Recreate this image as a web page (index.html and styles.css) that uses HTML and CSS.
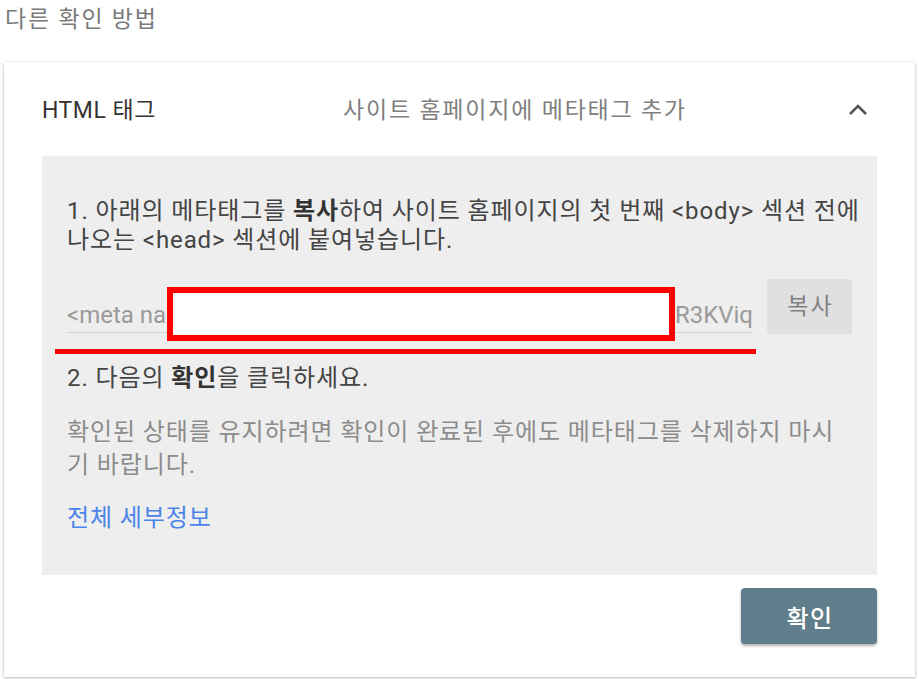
FILE: index.html
```html
<!DOCTYPE html>
<html lang="ko">
<head>
<meta charset="utf-8">
<title>다른 확인 방법</title>
<link rel="stylesheet" href="styles.css">
</head>
<body>
<div class="page">
  <h1 class="title">다른 확인 방법</h1>
  <section class="card">
    <div class="card-head">
      <span class="head-name">HTML 태그</span>
      <span class="head-desc">사이트 홈페이지에 메타태그 추가</span>
      <svg class="chevron" width="20" height="14" viewBox="0 0 20 14"><path d="M2 12 L10 4 L18 12" fill="none" stroke="#555" stroke-width="2.6"/></svg>
    </div>
    <div class="panel">
      <p class="step">1. 아래의 메타태그를 <b>복사</b>하여 사이트 홈페이지의 첫 번째 &lt;body&gt; 섹션 전에 나오는 &lt;head&gt; 섹션에 붙여넣습니다.</p>
      <div class="copy-row">
        <div class="meta-input"><span>&lt;meta na</span><span>R3KViq</span></div>
        <button class="copy-btn">복사</button>
      </div>
      <p class="step step2">2. 다음의 <b>확인</b>을 클릭하세요.</p>
      <p class="note">확인된 상태를 유지하려면 확인이 완료된 후에도 메타태그를 삭제하지 마시기 바랍니다.</p>
      <a class="details" href="#">전체 세부정보</a>
    </div>
    <div class="actions">
      <button class="confirm-btn">확인</button>
    </div>
  </section>
  <div class="redact-box"></div>
  <div class="redact-line"></div>
</div>
</body>
</html>
```

FILE: styles.css
```css
* { box-sizing: border-box; }
html, body { margin: 0; padding: 0; background: #fff; }
body {
  font-family: Roboto, "Noto Sans CJK KR", sans-serif;
  color: #444;
}
.page { position: relative; width: 918px; height: 679px; overflow: hidden; }
.title {
  margin: 5px 0 0 5px;
  font-size: 23px;
  letter-spacing: 1.8px;
  line-height: 29px;
  font-weight: 400;
  color: #7a7a7a;
}
.card {
  margin: 28px 0 0 4px;
  width: 911px;
  height: 615px;
  background: #fff;
  box-shadow: 0 1px 3px rgba(0,0,0,0.28), 0 0 1px rgba(0,0,0,0.12);
  display: flex;
  flex-direction: column;
}
.card-head {
  height: 94px;
  display: flex;
  align-items: center;
  padding: 0 47px 2px 38px;
  font-size: 23px;
}
.head-name { width: 301px; color: #333; letter-spacing: 0.5px; }
.head-desc { flex: 1; color: #808080; letter-spacing: 1.8px; }
.chevron { display: block; margin-top: 2px; }
.panel {
  margin: 0 38px;
  height: 419px;
  background: #eeeeee;
  padding: 41px 12px 0 25px;
  font-size: 24px;
  letter-spacing: 0.9px;
  line-height: 29px;
}
.step { margin: 0; color: #444; }
.step b { font-weight: 700; color: #333; }
.copy-row {
  margin-top: 24px;
  margin-right: 13px;
  height: 55px;
  display: flex;
  align-items: flex-end;
  gap: 14px;
  letter-spacing: 0;
}
.meta-input {
  flex: 1;
  height: 42px;
  padding-top: 8px;
  border-bottom: 1px solid #cfcfcf;
  display: flex;
  justify-content: space-between;
  font-family: Roboto, sans-serif;
  font-size: 24px;
  line-height: 32px;
  color: #9a9a9a;
  white-space: nowrap;
  overflow: hidden;
  margin-bottom: 1px;
}
.copy-btn {
  width: 85px;
  height: 55px;
  border: none;
  border-radius: 3px;
  background: #e0e0e0;
  color: #808080;
  font-family: Roboto, "Noto Sans CJK KR", sans-serif;
  font-size: 23px;
  letter-spacing: 2px;
  padding: 0 0 6px 2px;
}
.step2 { margin-top: 30px; }
.note {
  margin: 23px 15px 0 0;
  line-height: 33px;
  color: #8c8c8c;
}
.details {
  display: block;
  margin-top: 22px;
  color: #4a84e8;
  text-decoration: none;
  font-size: 24px;
}
.actions {
  display: flex;
  justify-content: flex-end;
  padding: 13px 38px 0 0;
}
.confirm-btn {
  width: 136px;
  height: 56px;
  border: none;
  border-radius: 4px;
  background: #607d8b;
  color: #fff;
  font-family: Roboto, "Noto Sans CJK KR", sans-serif;
  font-size: 24px;
  letter-spacing: 1.5px;
  font-weight: 500;
  padding: 0 0 0 2px;
  box-shadow: 0 2px 3px rgba(0,0,0,0.3);
}
.redact-box {
  position: absolute;
  left: 167px;
  top: 287px;
  width: 508px;
  height: 54px;
  border: 6px solid #ff0000;
  background: #fff;
}
.redact-line {
  position: absolute;
  left: 55px;
  top: 349px;
  width: 701px;
  height: 5px;
  background: #ff0000;
}
```
